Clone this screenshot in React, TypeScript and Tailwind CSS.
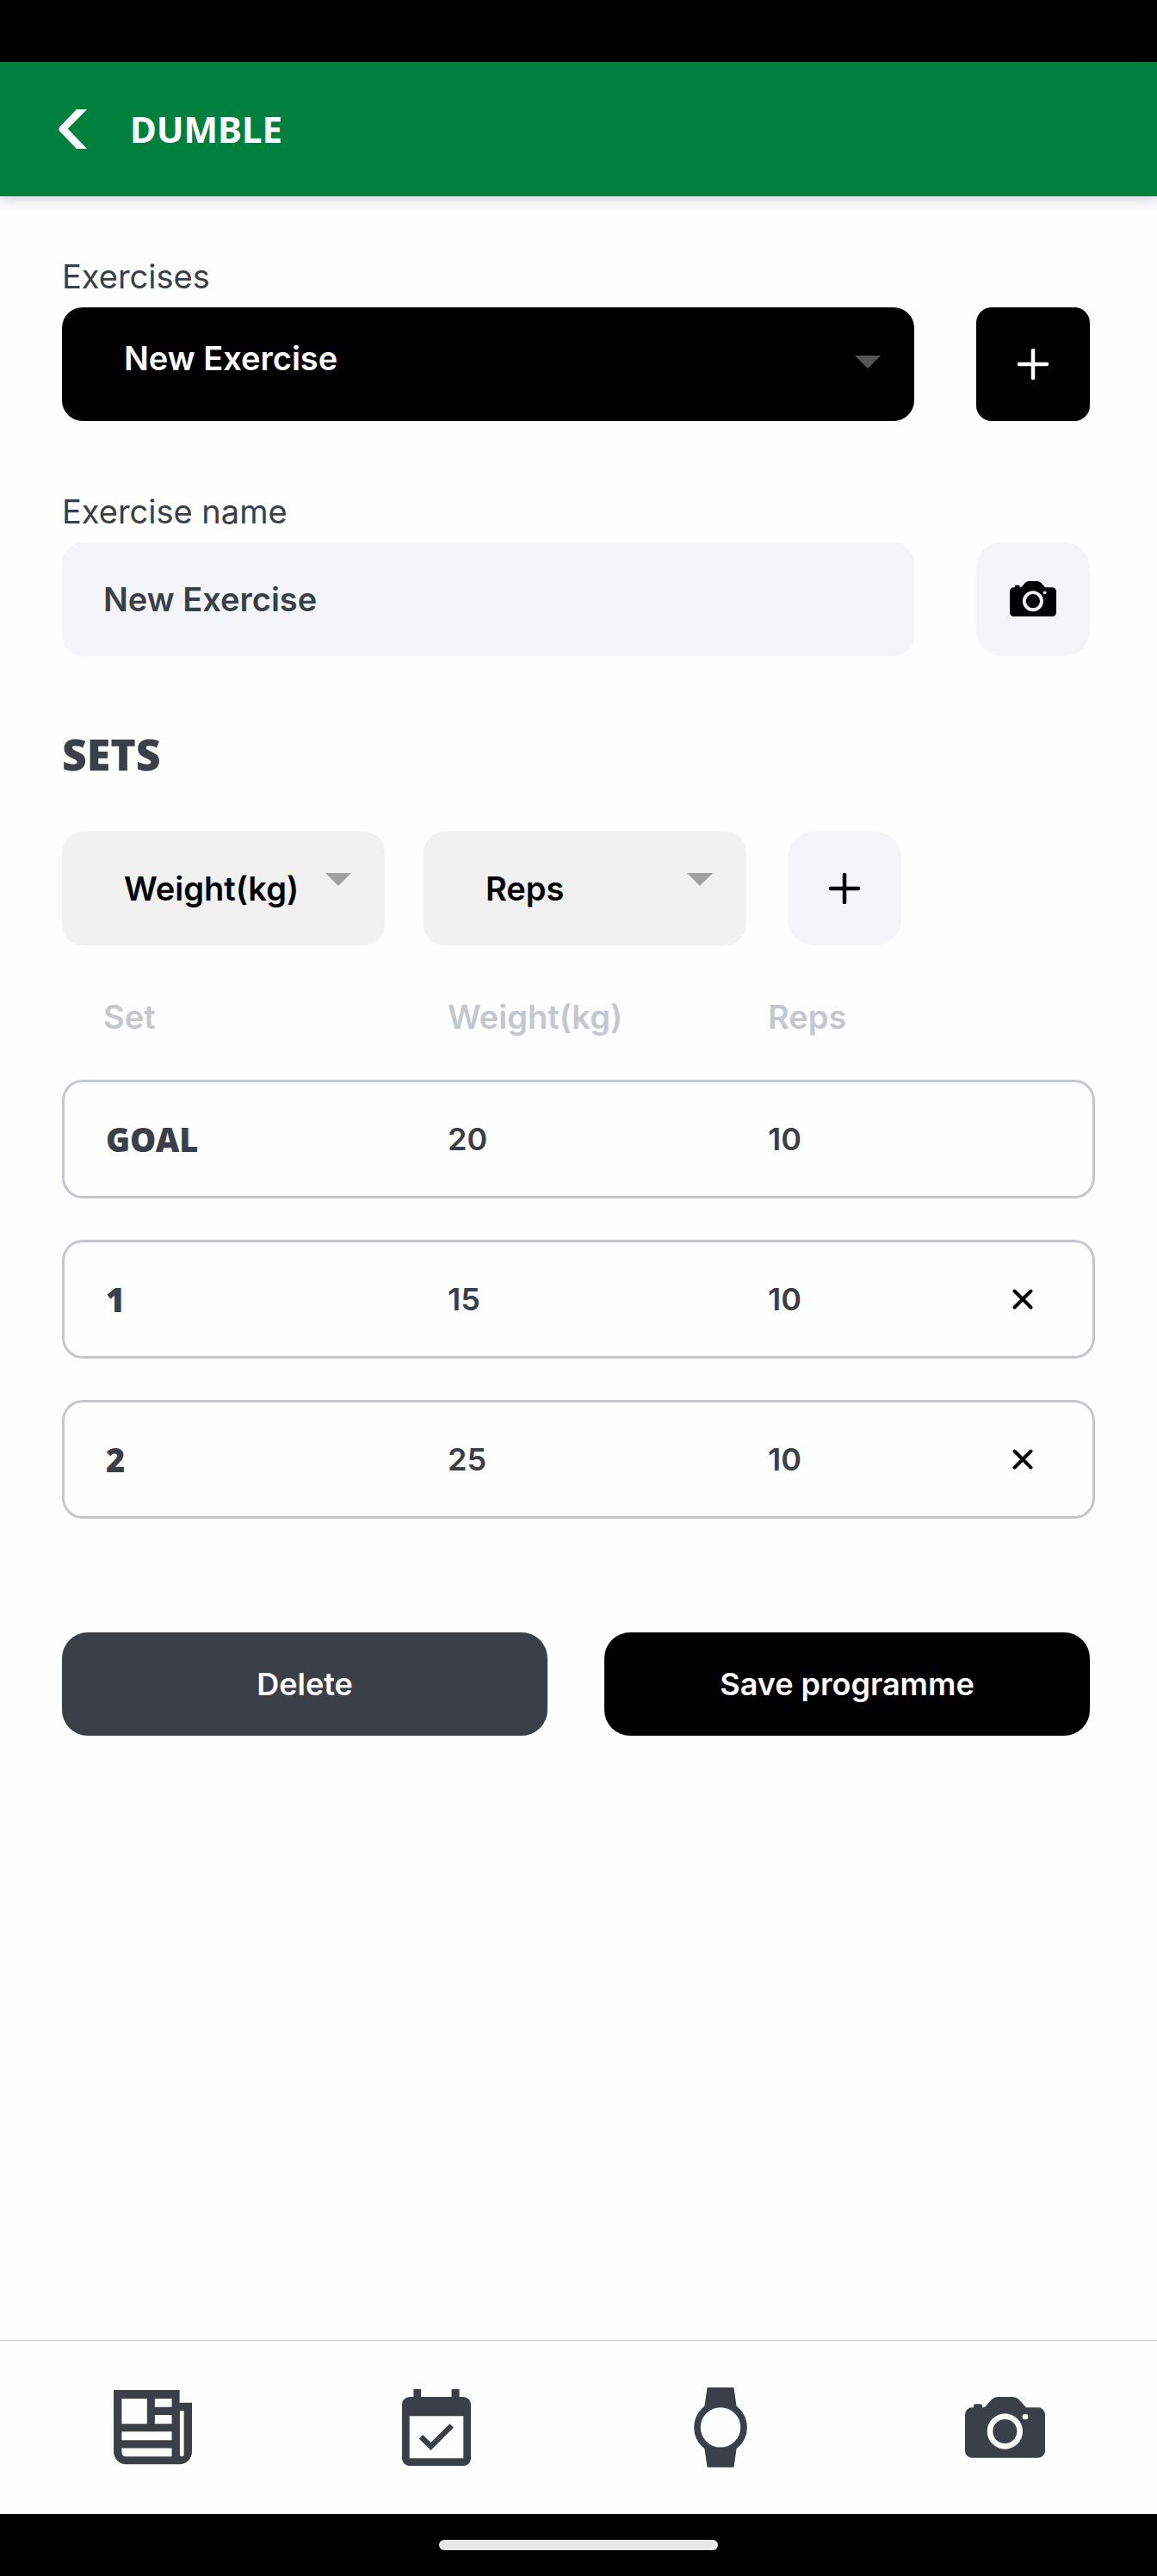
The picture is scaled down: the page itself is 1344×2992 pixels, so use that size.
import React from "react";

type IconProps = { className?: string };

const NewsIcon = ({ className }: IconProps) => (
  <svg viewBox="0 0 272 258" className={className} fill="currentColor" fillRule="evenodd" aria-hidden="true">
    <path d="M0 0H229V44H272V214a44 44 0 0 1-44 44H44a44 44 0 0 1-44-44ZM28 30V117H116V30ZM143 30V59H202V30ZM143 87V117H202V87ZM28 144V174H202V144ZM28 202V217a14 14 0 0 0 14 14H202V202ZM230 72V224a7 7 0 0 0 14 0V72Z" />
  </svg>
);

const CalendarIcon = ({ className }: IconProps) => (
  <svg viewBox="0 0 239 266" className={className} fill="currentColor" fillRule="evenodd" aria-hidden="true">
    <path d="M40 0H66V27H172V0H199V27H213a26 26 0 0 1 26 26V240a26 26 0 0 1-26 26H26a26 26 0 0 1-26-26V53a26 26 0 0 1 26-26H40ZM26 93V240H213V93Z" />
    <path d="M59 172L72 158L100 185L166 120L179 133L100 212Z" />
  </svg>
);

const WatchIcon = ({ className }: IconProps) => (
  <svg viewBox="0 0 187 280" className={className} fill="currentColor" aria-hidden="true">
    <circle cx="93.5" cy="140" r="81.5" fill="none" stroke="currentColor" strokeWidth="23" />
    <path d="M47 0H140L151 75A87 87 0 0 0 36 75Z" />
    <path d="M47 280H140L151 205A87 87 0 0 1 36 205Z" />
  </svg>
);

const CameraIcon = ({ className }: IconProps) => (
  <svg viewBox="0 0 279 212" className={className} fill="currentColor" fillRule="evenodd" aria-hidden="true">
    <path d="M24 37H30V31Q30 25 36 25H54Q60 25 60 31V37Q68 38 74 31L92 10Q102 0 114 0H164Q178 0 188 10L213 37H255a24 24 0 0 1 24 24V188a24 24 0 0 1-24 24H24a24 24 0 0 1-24-24V61a24 24 0 0 1 24-24ZM139 58a62 62 0 1 0 0 124a62 62 0 1 0 0-124ZM210 59a10 10 0 1 0 0 20a10 10 0 1 0 0-20Z" />
    <circle cx="139" cy="120" r="42" />
  </svg>
);

const PlusIcon = () => (
  <svg viewBox="0 0 36 36" className="size-9" stroke="currentColor" strokeWidth="4.5" strokeLinecap="round" aria-hidden="true">
    <path d="M18 2V34M2 18H34" />
  </svg>
);

const CloseIcon = () => (
  <svg viewBox="0 0 24 24" className="size-6" stroke="currentColor" strokeWidth="4" strokeLinecap="round" aria-hidden="true">
    <path d="M2.5 2.5L21.5 21.5M21.5 2.5L2.5 21.5" />
  </svg>
);

const ArrowIcon = ({ className }: IconProps) => (
  <svg viewBox="0 0 30 15" className={className} fill="currentColor" aria-hidden="true">
    <path d="M0 0H30L15 15Z" />
  </svg>
);

const UnitSelect = ({ label }: { label: string }) => (
  <div className="relative w-[375px]">
    <select
      aria-label={label}
      className="h-[132px] w-full appearance-none rounded-3xl bg-[#f1f1f1] pl-[72px] font-semibold text-black"
    >
      <option>{label}</option>
    </select>
    <ArrowIcon className="pointer-events-none absolute top-12 right-[39px] w-[30px] text-[#a0a0a0]" />
  </div>
);

const sets = [
  { name: "GOAL", weight: 20, reps: 10, removable: false },
  { name: "1", weight: 15, reps: 10, removable: true },
  { name: "2", weight: 25, reps: 10, removable: true },
];

const tabs = [
  { name: "News", icon: <NewsIcon className="w-[91px]" /> },
  { name: "Calendar", icon: <CalendarIcon className="w-[80px]" /> },
  { name: "Watch", icon: <WatchIcon className="w-[62px]" /> },
  { name: "Camera", icon: <CameraIcon className="w-[93px]" /> },
];

const App = () => {
  return (
    <div className="flex min-h-screen flex-col bg-[#fefefe] font-[Inter,sans-serif] text-[38px] leading-[48px] text-[#3b3f47]">
      {/* Status bar */}
      <div className="h-[72px] bg-black"></div>

      <header className="flex h-[156px] items-center gap-[50px] bg-[#007f3f] pl-[68px] text-white shadow-[0_6px_12px_rgba(60,50,90,0.18)]">
        <button type="button" aria-label="Back">
          <svg viewBox="0 0 98 136" className="w-[33px]" fill="currentColor" aria-hidden="true">
            <path d="M62 0H98L32 67L98 136H62L3 74Q-1 68 3 62Z" />
          </svg>
        </button>
        <h1 className="font-['Noto_Sans',sans-serif] text-[42px] font-bold">DUMBLE</h1>
      </header>

      <main className="flex-1 px-[72px] pt-[69px]">
        <div className="pr-1.5">
          <label htmlFor="exercise" className="mb-3 block">Exercises</label>
          <div className="flex gap-[72px]">
            <div className="relative flex-1">
              <select
                id="exercise"
                className="h-[132px] w-full appearance-none rounded-3xl bg-black pb-3.5 pl-[72px] font-semibold text-white"
              >
                <option>New Exercise</option>
              </select>
              <ArrowIcon className="pointer-events-none absolute top-14 right-[39px] w-[30px] text-[#545454]" />
            </div>
            <button
              type="button"
              aria-label="Add exercise"
              className="flex size-[132px] items-center justify-center rounded-[18px] bg-black text-white"
            >
              <PlusIcon />
            </button>
          </div>

          <label htmlFor="exercise-name" className="mt-[81px] mb-3 block">Exercise name</label>
          <div className="flex gap-[72px]">
            <input
              id="exercise-name"
              type="text"
              defaultValue="New Exercise"
              className="h-[132px] min-w-0 flex-1 rounded-3xl bg-[#f3f5f9] px-12 font-semibold"
            />
            <button
              type="button"
              aria-label="Add photo"
              className="flex size-[132px] items-center justify-center rounded-[30px] bg-[#f3f5f9] text-black"
            >
              <CameraIcon className="w-[54px]" />
            </button>
          </div>
        </div>

        <h2 className="mt-[84px] mb-[60px] font-['Noto_Sans',sans-serif] text-[50px] leading-[60px] font-black">SETS</h2>

        <div className="flex">
          <UnitSelect label="Weight(kg)" />
          <div className="ml-[45px]">
            <UnitSelect label="Reps" />
          </div>
          <button
            type="button"
            aria-label="Add set"
            className="ml-12 flex size-[132px] items-center justify-center rounded-[30px] bg-[#f3f5f9] text-black"
          >
            <PlusIcon />
          </button>
        </div>

        <table className="mt-[10px] w-full table-fixed border-separate border-spacing-x-0 border-spacing-y-12 text-left">
          <thead>
            <tr className="h-[50px] text-[#c4c8ce]">
              <th className="w-[37%] py-0 pl-12 font-semibold">Set</th>
              <th className="w-[31%] py-0 pl-1 font-semibold">Weight(kg)</th>
              <th className="w-[24%] py-0 pl-1 font-semibold">Reps</th>
              <td></td>
            </tr>
          </thead>
          <tbody>
            {sets.map((set) => (
              <tr key={set.name} className="h-[138px] text-[36px]">
                <th className="rounded-l-3xl border-y-3 border-l-3 border-[#c4c8ce] pl-12 font-['Noto_Sans',sans-serif] text-[38px] font-black">
                  {set.name}
                </th>
                <td className="border-y-3 border-[#c4c8ce] pl-1 font-semibold">{set.weight}</td>
                <td className="border-y-3 border-[#c4c8ce] pl-1 font-semibold">{set.reps}</td>
                <td className="rounded-r-3xl border-y-3 border-r-3 border-[#c4c8ce] text-black">
                  {set.removable && (
                    <button type="button" aria-label={`Remove set ${set.name}`} className="block">
                      <CloseIcon />
                    </button>
                  )}
                </td>
              </tr>
            ))}
          </tbody>
        </table>

        <div className="mt-[84px] flex gap-[66px] pr-1.5 text-[36px] font-semibold text-white">
          <button type="button" className="h-[120px] flex-1 rounded-[30px] bg-[#3b3f47]">Delete</button>
          <button type="button" className="h-[120px] flex-1 rounded-[30px] bg-black">Save programme</button>
        </div>
      </main>

      <nav className="grid h-[202px] grid-cols-4 border-t border-[#c9cacc] px-3">
        {tabs.map((tab) => (
          <button key={tab.name} type="button" aria-label={tab.name} className="flex items-center justify-center">
            {tab.icon}
          </button>
        ))}
      </nav>

      {/* Home indicator */}
      <div className="flex h-[72px] items-center justify-center bg-black">
        <div className="h-3 w-[324px] rounded-full bg-[#e8e8e8]"></div>
      </div>
    </div>
  );
};

export default App;
